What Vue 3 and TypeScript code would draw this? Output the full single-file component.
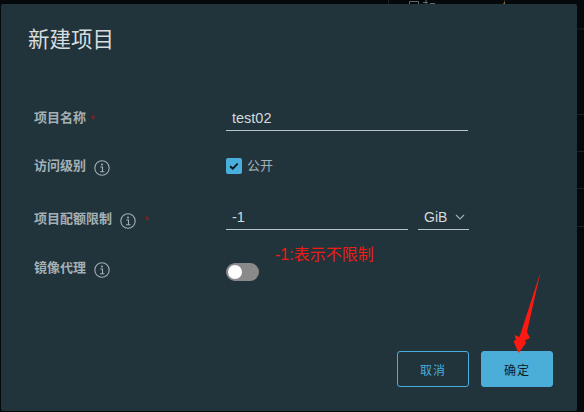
<script setup lang="ts">
const mirror = false
</script>

<template>
  <div class="backdrop">
    <svg class="bg-marks" viewBox="0 0 584 412">
      <path class="line" d="M388.500 0V4M504.500 0V4M577 29H584M577 114.500H584M577 151.500H584M577 188.500H584M577 226.500H584" />
      <path class="glyph" d="M409.500 4V1.500H418.500V4M423 2.500H428M426 0V4M430 3.500H435" />
      <path class="spark" d="M503 4L505 1V4Z" />
    </svg>
    <section class="modal">
      <h1 class="title">新建项目</h1>
      <form class="form" @submit.prevent>
        <div class="row r1">
          <label class="label">项目名称<i class="req">*</i></label>
          <div class="field wide"><span class="val">test02</span></div>
        </div>
        <div class="row r2">
          <label class="label">访问级别
            <svg class="info" viewBox="0 0 16 16"><circle cx="8" cy="8" r="7.2"/><circle class="dot" cx="8" cy="4.600" r="1"/><path d="M6.300 7h2.200v4.600M6 11.800h4.400"/></svg>
          </label>
          <div class="check-wrap">
            <span class="check"><svg viewBox="0 0 16 16"><path d="M3.600 8.200l3 2.800 5.600-5.800"/></svg></span>
            <span class="check-label">公开</span>
          </div>
        </div>
        <div class="row r3">
          <label class="label">项目配额限制
            <svg class="info" viewBox="0 0 16 16"><circle cx="8" cy="8" r="7.2"/><circle class="dot" cx="8" cy="4.600" r="1"/><path d="M6.300 7h2.200v4.600M6 11.800h4.400"/></svg>
            <i class="req req-gap">*</i>
          </label>
          <div class="quota">
            <div class="field num"><span class="val">-1</span></div>
            <div class="field unit"><span class="val gib">GiB</span>
              <svg class="chev" viewBox="0 0 10 6"><path d="M1 1l4 4 4-4"/></svg>
            </div>
          </div>
        </div>
        <div class="row r4">
          <label class="label">镜像代理
            <svg class="info" viewBox="0 0 16 16"><circle cx="8" cy="8" r="7.2"/><circle class="dot" cx="8" cy="4.600" r="1"/><path d="M6.300 7h2.200v4.600M6 11.800h4.400"/></svg>
          </label>
          <div class="toggle" :class="{ on: mirror }"><span class="knob"></span></div>
        </div>
      </form>
      <footer class="actions">
        <button class="btn ghost" type="button">取消</button>
        <button class="btn primary" type="button">确定</button>
      </footer>
      <p class="note">-1:表示不限制</p>
      <svg class="arrow" viewBox="0 0 60 100"><path d="M40.500 7L27 67L30 73L25 75.500L26 78L18.500 88L13.500 76L16 75L14.500 70L19.500 72Z"/></svg>
    </section>
  </div>
</template>

<style>
html, body { margin: 0; background: #05090c; }
</style>

<style scoped>
.backdrop {
  position: relative;
  width: 584px;
  height: 412px;
  box-sizing: border-box;
  padding: 4px 7px 1px 1px;
  background: #05090c;
  overflow: hidden;
  font-family: "Liberation Sans", "Noto Sans CJK SC", sans-serif;
}
.bg-marks { position: absolute; left: 0; top: 0; width: 584px; height: 412px; fill: none; }
.line { stroke: #1a2226; stroke-width: 1; }
.glyph { stroke: #5f686c; stroke-width: 1; }
.spark { fill: #8a6a3a; }
.modal {
  position: relative;
  height: 407px;
  box-sizing: border-box;
  background: #21333b;
  border-radius: 2px;
  display: flex;
  flex-direction: column;
  padding: 0 24px 24px 33px;
}
.title {
  margin: 20px 0 0 -6px;
  font-size: 21.500px;
  line-height: 32px;
  font-weight: 400;
  color: #d8dddf;
}
.form { display: flex; flex-direction: column; margin-top: 50px; flex: 1; }
.row { display: flex; align-items: flex-start; }
.r1 { height: 50px; }
.r2 { height: 51px; }
.r3 { height: 51px; }
.label {
  width: 192px;
  flex: none;
  display: flex;
  align-items: center;
  font-size: 13px;
  line-height: 20px;
  font-weight: 700;
  color: #a3b0b5;
}
.req { color: #8f2018; font-style: normal; font-weight: 400; font-size: 13px; margin-left: 4px; margin-top: 4px; }
.req-gap { margin-left: 8px; }
.info { width: 16px; height: 16px; margin-left: 8px; margin-top: 3px; fill: none; stroke: #a3b0b5; stroke-width: 1.100; }
.info .dot { fill: #a3b0b5; stroke: none; }
.field {
  box-sizing: border-box;
  height: 27px;
  padding-top: 2px;
  border-bottom: 1px solid #b9c5c9;
  display: flex;
  align-items: center;
}
.wide { width: 242px; margin-top: -2px; }
.val { color: #d4dadc; font-size: 14.500px; padding-left: 6px; }
.quota { display: flex; gap: 10px; margin-top: -4px; }
.num { width: 182px; }
.unit { width: 51px; position: relative; }
.gib { padding-left: 6px; font-size: 14px; }
.chev { width: 10px; height: 6px; margin-left: 8px; fill: none; stroke: #a3b0b5; stroke-width: 1.100; }
.check-wrap { display: flex; align-items: center; gap: 6px; }
.check {
  width: 16px;
  height: 16px;
  border-radius: 2px;
  background: #49aedb;
  display: flex;
  align-items: center;
  justify-content: center;
}
.check svg { width: 14px; height: 14px; fill: none; stroke: #07181f; stroke-width: 2.200; }
.check-label { color: #a3b0b5; font-size: 13px; line-height: 20px; margin-left: -1px; }
.toggle {
  width: 33px;
  height: 18px;
  margin-top: 5px;
  border-radius: 9px;
  background: #8a8a8a;
  display: flex;
  align-items: center;
  padding-left: 2px;
  box-sizing: border-box;
}
.knob { width: 14px; height: 14px; border-radius: 50%; background: #fff; }
.actions { display: flex; justify-content: flex-end; gap: 12px; }
.btn {
  width: 72px;
  height: 36px;
  box-sizing: border-box;
  border-radius: 3px;
  font-family: inherit;
  font-size: 12px;
  letter-spacing: 1px;
  padding: 0;
}
.ghost { background: transparent; border: 1px solid #49aedb; color: #49aedb; }
.primary { background: #4baed9; border: 1px solid #4baed9; color: #0d1c23; }
.note {
  position: absolute;
  left: 274px;
  top: 241px;
  margin: 0;
  color: #ee1c14;
  font-size: 16px;
  line-height: 20px;
}
.arrow {
  position: absolute;
  left: 499px;
  top: 261px;
  width: 60px;
  height: 100px;
  fill: #fb1a12;
}
</style>
